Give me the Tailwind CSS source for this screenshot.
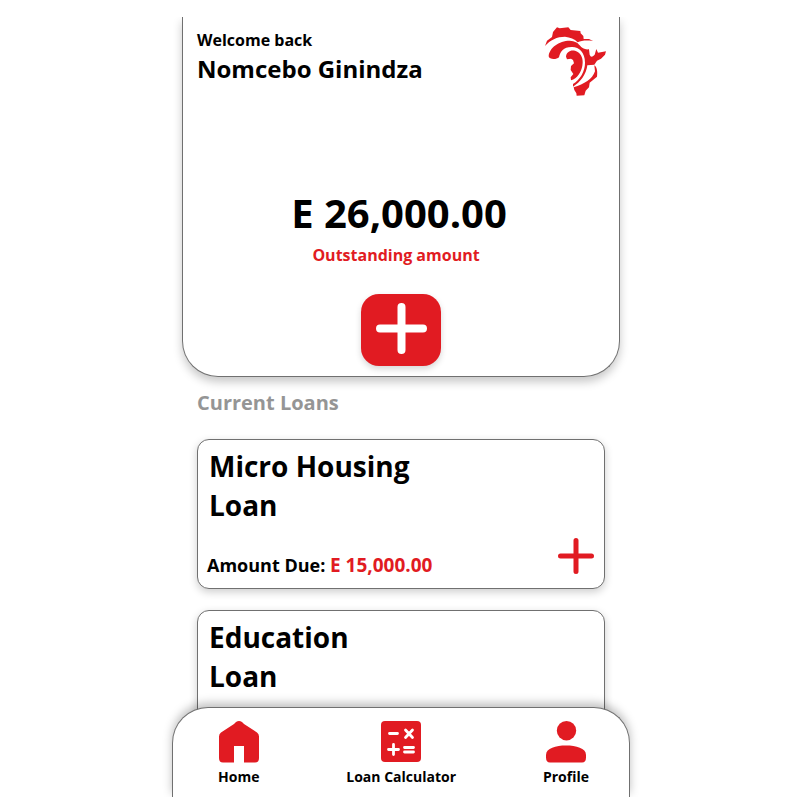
<!DOCTYPE html>
<html lang="en">
<head>
<meta charset="utf-8">
<meta name="viewport" content="width=device-width, initial-scale=1">
<title>Loans</title>
<script src="https://cdn.jsdelivr.net/npm/@tailwindcss/browser@4"></script>
</head>
<body class="flex h-screen flex-col bg-white pt-[17px] pr-0 pb-[3px] pl-0.5 font-['Open_Sans','Noto_Sans',sans-serif] font-bold text-black">
<div class="mx-auto grid min-h-0 w-full max-w-[458px] flex-1 grid-cols-1 grid-rows-[minmax(0,1fr)] overflow-y-clip">
  <main class="col-start-1 row-start-1 px-2.5">
    <section class="rounded-b-[36px] border border-t-0 border-[#707070] bg-white px-3.5 pt-[11px] pb-2.5 shadow-[0_5px_10px_rgba(0,0,0,0.22)]">
      <header class="flex h-20 justify-between">
        <div>
          <p class="text-[16px] leading-6">Welcome back</p>
          <h1 class="text-[24px] leading-[34px]">Nomcebo Ginindza</h1>
        </div>
        <svg class="-mt-1 -mr-1 h-[74px] w-[66px]" viewBox="0 0 198 222" fill="#e11b22" role="img" aria-label="Africa logo">
          <path d="M6 66L12 50L27 39L30 24L42 10L50 13L76 10L83 18L112 21L113 28L121 36L122 45L138 45L150 51C132 49 116 49 104 55C94 44 82 40 66 38C42 38 22 48 6 66Z"/>
          <path d="M17 97C18 72 48 50 80 50C96 51 104 56 110 64C117 73 126 78 138 76L140 92Q144 104 155 92L160 75L165 86L189 82L186 92L174 104L162 110L154 122L133 124C130 150 112 176 90 188L90 180C112 166 126 142 126 116C126 86 108 69 88 69C62 68 52 82 48 100C40 108 18 107 17 97Z"/>
          <path d="M69 98C70 84 82 77 96 80C112 84 120 100 119 116C118 142 102 164 84 169L83 160L91 150L83 138L84 126L93 118L90 108L84 104L72 106Z"/>
          <path d="M154 124C162 130 164 142 162 158L140 176L138 190L128 200L124 214L101 215L100 208L94 198L92 190C124 180 148 166 156 142Z"/>
        </svg>
      </header>
      <div class="pt-[81px] text-center">
        <p class="pr-1 text-[40px] leading-[48px]">E 26,000.00</p>
        <p class="pt-1 pr-2.5 text-[16px] leading-7 text-[#e11b22]">Outstanding amount</p>
      </div>
      <button type="button" aria-label="Add loan" class="mx-auto mt-[25px] grid h-[72px] w-20 place-items-center rounded-[18px] bg-[#e11b22] pb-[3px] shadow-[0_3px_6px_rgba(0,0,0,0.16)]">
        <svg class="size-[51px]" viewBox="0 0 51 51" stroke="#fff" stroke-width="8" stroke-linecap="round"><path d="M25.500 4V47M4 25.500H47"/></svg>
      </button>
    </section>
    <section class="px-[15px] pt-2.5">
      <h2 class="text-[20px] leading-8 text-[#959595]">Current Loans</h2>
      <ul class="mt-5 flex flex-col gap-[21px]">
        <li class="flex h-[150px] flex-col justify-between rounded-xl border border-[#707070] bg-white pt-[7px] pr-2.5 pb-[9px] pl-[11px] shadow-[0_3px_8px_rgba(0,0,0,0.2)]">
          <h3 class="w-56 text-[28px] leading-[39px]">Micro Housing Loan</h3>
          <div class="flex items-end justify-between">
            <p class="-ml-0.5 text-[18px] leading-7">Amount Due: <span class="text-[19px] text-[#e11b22]">E 15,000.00</span></p>
            <button type="button" aria-label="Open Micro Housing Loan" class="mb-[5px]"><svg class="size-9" viewBox="0 0 36 36" stroke="#e11b22" stroke-width="5" stroke-linecap="round"><path d="M18 2.500V33.500M2.500 18H33.500"/></svg></button>
          </div>
        </li>
        <li class="flex h-[150px] flex-col justify-between rounded-xl border border-[#707070] bg-white pt-[7px] pr-2.5 pb-[9px] pl-[11px] shadow-[0_3px_8px_rgba(0,0,0,0.2)]">
          <h3 class="w-40 text-[28px] leading-[39px]">Education Loan</h3>
        </li>
      </ul>
    </section>
  </main>
  <nav class="z-10 col-start-1 row-start-1 flex h-[90px] justify-between self-end rounded-t-[36px] border border-b-0 border-[#707070] bg-white pt-[13px] pr-10 pl-[45px] text-[14px] leading-5 shadow-[0_-4px_10px_rgba(0,0,0,0.25)]">
    <a href="#home" class="flex flex-col items-center gap-1">
      <svg class="h-[42px] w-10" viewBox="0 0 40 42" fill="#e11b22"><path d="M17 1Q20 -1 23 1L25 3L38 11.500Q40 13 40 15.500V37Q40 41.500 36 41.500H25V25H15V41.500H4Q0 41.500 0 37V15.500Q0 13 2 11.500L15 3Z"/></svg>
      <span>Home</span>
    </a>
    <a href="#calculator" class="flex flex-col items-center gap-1">
      <svg class="h-[42px] w-10" viewBox="0 0 40 42"><rect width="40" height="41" rx="4" fill="#e11b22"/><path d="M8.500 12.500H16.500M24.500 9L31.500 16.500M31.500 9L24.500 16.500M7.500 28.500H17.500M12.500 23.500V33.500M23.500 26.500H32.500M23.500 31H32.500" fill="none" stroke="#fff" stroke-width="2.800" stroke-linecap="round"/></svg>
      <span>Loan Calculator</span>
    </a>
    <a href="#profile" class="flex flex-col items-center gap-1">
      <svg class="h-[42px] w-10" viewBox="0 0 40 42" fill="#e11b22"><circle cx="20.500" cy="9.700" r="9.700"/><path d="M0 34C0 27 10 24.500 20 24.500S40 27 40 34V36.500Q40 41.500 36 41.500H4Q0 41.500 0 36.500Z"/></svg>
      <span>Profile</span>
    </a>
  </nav>
</div>
</body>
</html>
